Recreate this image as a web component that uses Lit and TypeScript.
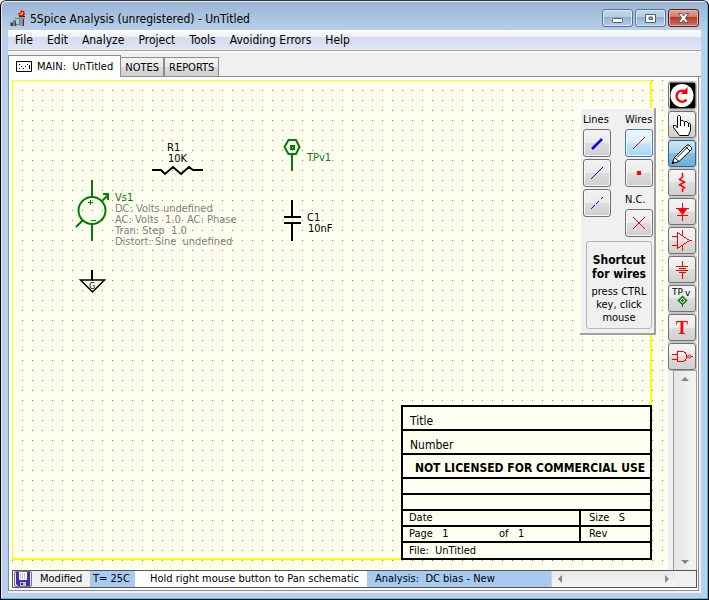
import { LitElement, html, svg, css } from "lit";
import { customElement, property, state } from "lit/decorators.js";
import { classMap } from "lit/directives/class-map.js";

const TOOL_ICONS: Record<string, unknown> = {
  refresh: svg`
    <rect x="1" y="0" width="25" height="25" fill="#000" />
    <circle cx="13" cy="12.500" r="11.500" fill="#fff" />
    <path d="M17.500 16.500A5.500 5.500 0 1 1 15.500 8.200" fill="none" stroke="#f00" stroke-width="2.500" />
    <path d="M18.500 4V11H12Z" fill="#f00" />`,
  hand: svg`
    <path d="M8.500 15.500V4.500L9.500 3.500H10.500L11.500 4.500V9.500L12.500 8.500H14L15.500 10L16.500 9.500H18L19.500 11.500L20.500 11L21.500 12.500V18L19.500 23.500H10.500L4.500 15.500V13.500H6.500L8.500 16" fill="#fff" stroke="#000" />
    <path d="M11.500 9V14M15.500 10V14M19.500 11.500V15" fill="none" stroke="#000" />`,
  pencil: svg`
    <path d="M3 22.500L5.500 16.500L18 4H20L22.500 6.500V8.500L10 20.500Z" fill="#fff" stroke="#000" />
    <path d="M5.500 16.500L10 20.500M8 16.500L19 5.500M17 6L21 10" fill="none" stroke="#000" />
    <path d="M3 22.500L4 20L6 22Z" fill="#000" />`,
  resistor: svg`<path d="M13.500 3V7L10.500 9.500L15.500 12L10.500 15L15.500 17.500L13.500 19.500V22" fill="none" stroke="#f00" stroke-width="1.500" />`,
  diode: svg`
    <path d="M8 9H19L13.500 16Z" fill="#f00" />
    <path class="crisp" d="M13.500 4V22M8 16.500H19M7 9.500H20" fill="none" stroke="#f00" />`,
  opamp: svg`<path class="crisp" d="M8.500 4.500V20.500L20.500 12.500ZM3 8.500H8M3 17.500H8M20 12.500H23M13.500 2V7M13.500 18V23" fill="none" stroke="#f00" />`,
  battery: svg`<path class="crisp" d="M13.500 4V9M7 9.500H19M10 11.500H17M7 13.500H19M10 15.500H17M13.500 16V22" fill="none" stroke="#f00" />`,
  testpoint: svg`
    <text class="tp" x="3" y="9">TP</text>
    <text class="tp" x="16" y="10">v</text>
    <path d="M13.500 10.500L17.500 14.500L13.500 18.500L9.500 14.500Z" fill="none" stroke="#008000" stroke-width="1.500" />
    <path d="M13.500 13V16M12 14.500H15M13.500 18V21" stroke="#008000" />`,
  text: svg`<text class="tt" x="7" y="19">T</text>`,
  gate: svg`
    <path class="crisp" d="M8.500 7.500H14L16.500 9L18 12.500L16.500 16L14 17.500H8.500ZM3 10.500H8M3 15.500H8M22 12.500H24" fill="none" stroke="#f00" />
    <circle cx="20.500" cy="12.500" r="1.500" fill="none" stroke="#f00" />`,
};

const TOOLS = [
  ["refresh", "Repeat last"],
  ["hand", "Pan"],
  ["pencil", "Draw"],
  ["resistor", "Passive parts"],
  ["diode", "Semiconductors"],
  ["opamp", "Amplifiers"],
  ["battery", "Sources"],
  ["testpoint", "Test points"],
  ["text", "Text"],
  ["gate", "Logic"],
];

@customElement("tool-button")
class ToolButton extends LitElement {
  @property() icon = "";
  @property() name = "";
  @property({ type: Boolean }) active = false;

  static styles = css`
    :host {
      display: block;
    }
    .button {
      display: block;
      box-sizing: border-box;
      width: 28px;
      height: 27px;
      padding: 0;
      border: 1px solid #707070;
      border-radius: 3px;
      background: linear-gradient(#f4f4f4, #ebebeb 50%, #dddddd 50%, #d0d0d0);
      box-shadow: 0 0 0 1px #c4c4c4;
    }
    .active {
      border-color: #2c628b;
      background: linear-gradient(#cfe4f2, #a9d3ec 50%, #86c0e2 50%, #6cb0d8);
    }
    svg {
      display: block;
      width: 26px;
      height: 25px;
    }
    .crisp {
      shape-rendering: crispEdges;
    }
    .tp {
      font: 9px "DejaVu Sans", sans-serif;
    }
    .tt {
      font: bold 18px "Liberation Serif", serif;
      fill: #f00;
    }
  `;

  render() {
    return html`<button
      class=${classMap({ button: true, active: this.active })}
      aria-label=${this.name}
      aria-pressed=${this.active}
    >
      <svg viewBox="0 0 26 25" aria-hidden="true">${TOOL_ICONS[this.icon]}</svg>
    </button>`;
  }
}

@customElement("wire-palette")
class WirePalette extends LitElement {
  static styles = css`
    :host {
      display: block;
      box-sizing: border-box;
      width: 76px;
      padding: 5px 1px 4px 3px;
      background: #f0f0f0;
      border: solid #a0a0a0;
      border-width: 0 2px 2px 0;
      box-shadow: inset 1px 1px #fff;
      font: 11px/14px "DejaVu Sans Condensed", "Noto Sans", sans-serif;
      color: #000;
    }
    .columns {
      display: flex;
      justify-content: space-between;
    }
    .column {
      display: flex;
      flex-direction: column;
      gap: 2px;
      width: 28px;
    }
    .label {
      height: 14px;
      white-space: nowrap;
    }
    .nc {
      margin-top: 4px;
    }
    .button {
      display: block;
      box-sizing: border-box;
      width: 28px;
      height: 28px;
      padding: 0;
      border: 1px solid #707070;
      border-radius: 3px;
      background: linear-gradient(#f2f2f2, #ebebeb 50%, #dddddd 50%, #cfcfcf);
      box-shadow: inset 0 0 0 1px #f6f6f6;
    }
    .active {
      border-color: #3c7fb1;
      background: linear-gradient(#eaf6fd, #d9f0fc 50%, #bee6fd 50%, #a7d9f5);
    }
    svg {
      display: block;
      width: 26px;
      height: 26px;
      fill: none;
    }
    .crisp {
      shape-rendering: crispEdges;
    }
    .tip {
      margin: 4px 1px 0 3px;
      padding: 11px 0 4px;
      border: 1px solid #b4b4b4;
      border-radius: 3px;
      text-align: center;
      line-height: 13px;
    }
    .tip strong {
      display: block;
      font-size: 12px;
      line-height: 14px;
      margin-bottom: 4px;
    }
  `;

  private pick(name: string, drawing: unknown, active = false) {
    return html`<button class=${classMap({ button: true, active })} aria-label=${name}>
      <svg viewBox="0 0 26 26" aria-hidden="true">${drawing}</svg>
    </button>`;
  }

  render() {
    return html`
      <div class="columns">
        <div class="column">
          <div class="label">Lines</div>
          ${this.pick("Thick line", svg`<path d="M8 19L18 9" stroke="#00f" stroke-width="2.500" />`)}
          ${this.pick("Thin line", svg`<path class="crisp" d="M7 19L19 7" stroke="#00f" />`)}
          ${this.pick("Dashed line", svg`<path class="crisp" d="M7 19L19 7" stroke="#00f" stroke-dasharray="5 2" />`)}
        </div>
        <div class="column">
          <div class="label">Wires</div>
          ${this.pick("Wire", svg`<path class="crisp" d="M7 19L19 7" stroke="#f00" />`, true)}
          ${this.pick("Junction", svg`<path d="M11 11H15V15H11Z" fill="#f00" />`)}
          <div class="label nc">N.C.</div>
          ${this.pick("No connection", svg`<path class="crisp" d="M7 7L19 19M7 19L19 7" stroke="#f00" />`)}
        </div>
      </div>
      <div class="tip">
        <strong>Shortcut for wires</strong>
        press CTRL<br />key, click<br />mouse
      </div>
    `;
  }
}

@customElement("title-block")
class TitleBlock extends LitElement {
  static styles = css`
    :host {
      display: block;
      width: 251px;
      background: #fffff0;
      color: #000;
      font: 11px/12px "DejaVu Sans Condensed", "Noto Sans", sans-serif;
    }
    table {
      width: 100%;
      border-collapse: collapse;
      table-layout: fixed;
    }
    td {
      box-sizing: border-box;
      height: 16px;
      padding: 1px 6px;
      border: 2px solid #000;
      white-space: pre;
    }
    td + td {
      padding-left: 8px;
    }
    .tall {
      height: 24px;
      padding: 6px 7px 0;
      font-size: 12px;
    }
    .notice {
      padding: 4px 0 0 7px;
      text-align: center;
      font-weight: bold;
    }
    .file {
      height: 17px;
    }
    .side {
      width: 71px;
    }
    .fields {
      display: flex;
    }
    .page {
      flex: 0 0 90px;
    }
  `;

  render() {
    return html`<table>
      <colgroup><col /><col class="side" /></colgroup>
      <tr><td class="tall" colspan="2">Title</td></tr>
      <tr><td class="tall" colspan="2">Number</td></tr>
      <tr><td class="tall notice" colspan="2">NOT LICENSED FOR COMMERCIAL USE</td></tr>
      <tr><td colspan="2"></td></tr>
      <tr><td colspan="2"></td></tr>
      <tr><td>Date</td><td>Size   S</td></tr>
      <tr><td><div class="fields"><span class="page">Page   1</span><span>of   1</span></div></td><td>Rev</td></tr>
      <tr><td class="file" colspan="2">File:  UnTitled</td></tr>
    </table>`;
  }
}

@customElement("schematic-sheet")
class SchematicSheet extends LitElement {
  static styles = css`
    :host {
      position: relative;
      display: block;
      overflow: hidden;
      background: #fffff0;
    }
    .grid {
      position: absolute;
      inset: 0;
      width: 100%;
      height: 100%;
    }
    .frame {
      position: absolute;
      inset: 0 16px 10px 0;
      border: solid #ff0;
      border-width: 1px 2px 2px 1px;
    }
    .parts {
      position: absolute;
      left: 0;
      top: 0;
      width: 640px;
      height: 320px;
      fill: none;
      stroke: #000;
      stroke-width: 2;
    }
    text {
      font: 11px "DejaVu Sans Condensed", "Noto Sans", sans-serif;
      fill: #000;
      stroke: none;
      white-space: pre;
    }
    .green {
      stroke: #008000;
    }
    .green text {
      fill: #008000;
    }
    .green .note {
      fill: #808080;
    }
    .tiny {
      font-size: 9px;
    }
    title-block {
      position: absolute;
      right: 16px;
      bottom: 10px;
    }
    wire-palette {
      position: absolute;
      right: 12px;
      top: 28px;
    }
  `;

  render() {
    return html`
      <svg class="grid" aria-hidden="true">
        <defs>
          <pattern id="dots" width="10" height="10" patternUnits="userSpaceOnUse">
            <rect width="1" height="1" fill="#808080" />
          </pattern>
        </defs>
        <rect width="100%" height="100%" fill="url(#dots)" />
      </svg>
      <div class="frame"></div>
      <svg class="parts" viewBox="12 80 640 320">
        <g>
          <path d="M152 170H161L165 174L173 167L181 174L189 167L193 170H203" />
          <text x="167" y="151">R1</text>
          <text x="168" y="162">10K</text>
        </g>
        <g class="green">
          <circle cx="92" cy="210.500" r="13.500" />
          <path d="M92 180V197M92 224V241M102 201L108 195M103 194H108V200M76 227L83 220" />
          <path d="M88 202.500H93M90.500 200V205M91 220.500H96" stroke-width="1" />
          <text x="115" y="201">Vs1</text>
          <text class="note" x="115" y="212">DC: Volts undefined</text>
          <text class="note" x="115" y="223">AC: Volts  1.0  AC: Phase</text>
          <text class="note" x="115" y="234">Tran: Step  1.0</text>
          <text class="note" x="115" y="245">Distort: Sine  undefined</text>
        </g>
        <g>
          <path d="M92 270V280" />
          <path d="M80.500 280H104.500L92.500 292Z" stroke-width="1.500" />
          <text class="tiny" x="89" y="289">G</text>
        </g>
        <g class="green">
          <path d="M284.500 147L288.500 140H296L299.500 147L296 154H288.500ZM292 154V171" />
          <path d="M291 146H294V149H291Z" />
          <text x="307" y="161">TPv1</text>
        </g>
        <g>
          <path d="M292 200V217M284 217H301M284 223H301M292 223V241" />
          <text x="307" y="221">C1</text>
          <text x="308" y="232">10nF</text>
        </g>
      </svg>
      <title-block></title-block>
      <wire-palette></wire-palette>
    `;
  }
}

@customElement("app-root")
class AppRoot extends LitElement {
  @state() private tab = 0;
  @state() private tool = "pencil";

  static styles = css`
    :host {
      display: flex;
      flex-direction: column;
      box-sizing: border-box;
      height: 100vh;
      padding: 0 7px 6px 7px;
      border: 1px solid #000;
      border-top-color: #333;
      border-radius: 6px 6px 0 0;
      background: linear-gradient(#98b3d2, #b9d1ea 30px, #b9d1ea);
      box-shadow: inset -1px -1px #33c8f0, inset 1px 1px #e4eefa;
      color: #000;
      font: 11px/14px "DejaVu Sans Condensed", "Noto Sans", sans-serif;
    }
    .title {
      display: flex;
      align-items: center;
      gap: 4px;
      flex: 0 0 29px;
      padding: 5px 2px 0 2px;
      box-sizing: border-box;
    }
    .title h1 {
      flex: 1;
      margin: 0;
      padding-top: 1px;
      font-size: 12px;
      font-weight: normal;
    }
    .logo {
      width: 16px;
      height: 16px;
    }
    .window-buttons {
      display: flex;
      gap: 2px;
    }
    .window-button {
      width: 31px;
      height: 18px;
      padding: 0;
      border: 1px solid #56708f;
      border-radius: 3px;
      background: linear-gradient(#c3d6ea, #b4cbe4 45%, #91aecf 45%, #b4d0ea);
      box-shadow: inset 0 0 0 1px #dce9f6;
    }
    .close {
      border-color: #5a1a18;
      background: linear-gradient(#e0a298, #cf7a6c 45%, #b23a26 45%, #d2705a);
      box-shadow: inset 0 0 0 1px #eab8ae;
    }
    .window-button svg {
      display: block;
      margin: auto;
      width: 13px;
      height: 12px;
    }
    .client {
      display: flex;
      flex-direction: column;
      flex: 1;
      min-height: 0;
      background: #f0f0f0;
    }
    .menu {
      display: flex;
      gap: 14px;
      flex: 0 0 19px;
      padding: 0 7px;
      background: linear-gradient(#fff, #eef1f9 35%, #d6dcee 40%, #dde4f4);
      border-bottom: 1px solid #f0f0f0;
    }
    .menu button {
      padding: 1px 0 0;
      border: 0;
      background: none;
      color: #000;
      font: 12px/18px "DejaVu Sans Condensed", "Noto Sans", sans-serif;
    }
    .rule {
      flex: 0 0 1px;
      border-top: 1px solid #a0a0a0;
      background: #fff;
    }
    .tabs {
      display: flex;
      align-items: flex-end;
      flex: 0 0 23px;
      padding-top: 1px;
      border-bottom: 1px solid #898c95;
    }
    .tab {
      display: flex;
      align-items: center;
      gap: 5px;
      box-sizing: border-box;
      height: 19px;
      padding: 2px 4px 0;
      border: 1px solid #898c95;
      border-bottom: 0;
      background: linear-gradient(#f2f2f2, #ebebeb 50%, #dddddd 50%, #cfcfcf);
      color: #000;
      font: inherit;
      white-space: pre;
    }
    .selected {
      height: 22px;
      padding: 0 7px;
      margin-bottom: -1px;
      background: #fff;
    }
    .selected + .tab {
      margin-left: -1px;
    }
    .body {
      display: flex;
      flex-direction: column;
      flex: 1;
      min-height: 0;
      padding: 3px 1px 2px 3px;
      margin: 0 2px 2px 0;
      border: solid #898c95;
      border-width: 0 1px 1px 1px;
      background: #fff;
    }
    .work {
      display: flex;
      flex: 1;
      min-height: 0;
    }
    schematic-sheet {
      flex: 1;
    }
    .side {
      display: flex;
      flex-direction: column;
      flex: 0 0 29px;
      background: #f0f0f0;
    }
    .tools {
      display: flex;
      flex-direction: column;
      gap: 2px;
      padding: 2px 0 0;
    }
    .vscroll {
      display: flex;
      flex-direction: column;
      justify-content: space-between;
      flex: 1;
      margin: 0 0 0 5px;
      padding: 4px 0;
      border: solid #a0a0a0;
      border-width: 1px 1px 0 1px;
      background: linear-gradient(90deg, #e6e6e6, #f4f4f4);
    }
    .arrow {
      display: block;
      padding: 0;
      border: 0;
      background: none;
      color: #868686;
    }
    .arrow svg {
      display: block;
      margin: auto;
      width: 9px;
      height: 9px;
      fill: currentColor;
    }
    .status {
      display: flex;
      flex: 0 0 16px;
      border: 1px solid #555;
      background: #f0f0f0;
      line-height: 16px;
    }
    .status span {
      white-space: pre;
    }
    .save {
      display: block;
      width: 18px;
      height: 16px;
      margin-left: 1px;
      padding: 0;
      border: 1px solid #777;
      border-radius: 2px;
      background: #e4e4e4;
    }
    .save svg {
      display: block;
      width: 14px;
      height: 14px;
      margin: auto;
    }
    .modified {
      width: 50px;
      padding-left: 8px;
    }
    .blue {
      background: #a6caf0;
    }
    .temp {
      width: 42px;
      padding-left: 3px;
    }
    .hint {
      flex: 1;
      padding-left: 15px;
      background: #fff;
    }
    .analysis {
      width: 176px;
      padding-left: 8px;
    }
    .hscroll {
      display: flex;
      justify-content: space-between;
      width: 115px;
      padding: 0 4px;
      border-left: 1px solid #d0d0d0;
      background: linear-gradient(#e8e8e8, #f6f6f6);
    }
    .corner {
      width: 21px;
    }
  `;

  private arrow(name: string, d: string) {
    return html`<button class="arrow" aria-label=${name}>
      <svg viewBox="0 0 9 9" aria-hidden="true"><path d=${d} /></svg>
    </button>`;
  }

  render() {
    const menus = ["File", "Edit", "Analyze", "Project", "Tools", "Avoiding Errors", "Help"];
    const tabs = ["MAIN:  UnTitled", "NOTES", "REPORTS"];
    return html`
      <header class="title">
        <svg class="logo" viewBox="0 0 16 16" aria-hidden="true">
          <path d="M0 12H3V10H6V14H9V9H10V15H7V16H0Z" fill="#808080" />
          <path d="M1 13H3V16H1ZM5 11H6V16H5Z" fill="#404040" />
          <path d="M9 6H15V9H14V16H10V9H9Z" fill="#909090" />
          <path d="M9 6H15V7H9ZM13 9H14V16H13Z" fill="#303030" />
          <path d="M5 8H9V9H5Z" fill="#00a0a0" />
          <path d="M9 6L8 3L10 3L11 0L13 1L14 1L15 4L14 6Z" fill="#f00" />
          <path d="M11 3H12V2H13V4H12V5H10V4H11Z" fill="#ff0" />
        </svg>
        <h1>5Spice Analysis (unregistered) - UnTitled</h1>
        <div class="window-buttons">
          <button class="window-button" aria-label="Minimize">
            <svg viewBox="0 0 13 12"><rect x="1.500" y="6.500" width="10" height="4" rx="1" fill="#fff" stroke="#555d6b" /></svg>
          </button>
          <button class="window-button" aria-label="Maximize">
            <svg viewBox="0 0 13 12"><path d="M1.500 2.500H11.500V10.500H1.500ZM5 5V7.500H8.500V5Z" fill="#fff" fill-rule="evenodd" stroke="#555d6b" /></svg>
          </button>
          <button class="window-button close" aria-label="Close">
            <svg viewBox="0 0 13 12"><path d="M1.500 1.500H4.500L6.500 4L8.500 1.500H11.500L8.500 6L11.500 10.500H8.500L6.500 8L4.500 10.500H1.500L4.500 6Z" fill="#fff" stroke="#555d6b" /></svg>
          </button>
        </div>
      </header>
      <main class="client">
        <nav class="menu">${menus.map((m) => html`<button>${m}</button>`)}</nav>
        <div class="rule"></div>
        <div class="tabs" role="tablist">
          ${tabs.map(
            (t, i) => html`<button
              role="tab"
              aria-selected=${this.tab === i}
              class=${classMap({ tab: true, selected: this.tab === i })}
              @click=${() => (this.tab = i)}
            >${i === 0
              ? html`<svg width="16" height="11" viewBox="0 0 16 11" aria-hidden="true">
                  <path d="M.5.5H15.500V10.500H.5Z" fill="#fff" stroke="#000" />
                  <path d="M3 3H4V4H3ZM11 3H12V4H11ZM5 5H6V6H5ZM9 5H10V6H9ZM3 7H4V8H3ZM7 7H8V8H7ZM13 4H14V8H13Z" />
                </svg>`
              : ""}<span>${t}</span></button>`,
          )}
        </div>
        <section class="body">
          <div class="work">
            <schematic-sheet></schematic-sheet>
            <div class="side">
              <div class="tools">
                ${TOOLS.map(
                  ([icon, name]) => html`<tool-button
                    .icon=${icon}
                    .name=${name}
                    .active=${this.tool === icon}
                    @click=${() => (this.tool = icon)}
                  ></tool-button>`,
                )}
              </div>
              <div class="vscroll">
                ${this.arrow("Scroll up", "M0 6L4 2L8 6Z")}
                ${this.arrow("Scroll down", "M0 3L4 7L8 3Z")}
              </div>
            </div>
          </div>
          <footer class="status">
            <button class="save" aria-label="Save">
              <svg viewBox="0 0 14 14" aria-hidden="true">
                <path d="M0 0H14V14H2L0 12Z" fill="#4030b0" />
                <path d="M3 0H11V8H3Z" fill="#fff" />
                <path d="M4 2H10M4 4H10M4 6H10" stroke="#888" stroke-dasharray="1 1" />
                <path d="M4 10H10V14H4Z" fill="#c0c0d8" />
                <path d="M5 11H7V13H5Z" fill="#302080" />
              </svg>
            </button>
            <span class="modified">Modified</span>
            <span class="blue temp">T= 25C</span>
            <span class="hint">Hold right mouse button to Pan schematic</span>
            <span class="blue analysis">Analysis:  DC bias - New</span>
            <div class="hscroll">
              ${this.arrow("Scroll left", "M6 0L2 4L6 8Z")}
              ${this.arrow("Scroll right", "M3 0L7 4L3 8Z")}
            </div>
            <span class="corner"></span>
          </footer>
        </section>
      </main>
    `;
  }
}
